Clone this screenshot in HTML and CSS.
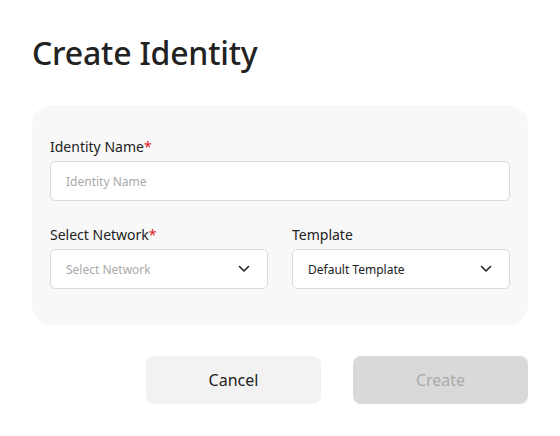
FILE: index.html
```html
<!DOCTYPE html>
<html>
<head>
<meta charset="utf-8">
<link rel="stylesheet" href="styles.css">
</head>
<body>
<div class="page">
  <h1 class="title">Create Identity</h1>
  <div class="card">
    <div class="field">
      <label class="label">Identity Name<span class="req">*</span></label>
      <div class="input placeholder">Identity Name</div>
    </div>
    <div class="row">
      <div class="field">
        <label class="label">Select Network<span class="req">*</span></label>
        <div class="input select placeholder">
          <span>Select Network</span>
          <svg class="chev" width="12" height="8" viewBox="0 0 12 8"><path d="M1.5 1.5 L6 6 L10.5 1.5" fill="none" stroke="#222" stroke-width="1.6" stroke-linecap="round" stroke-linejoin="round"/></svg>
        </div>
      </div>
      <div class="field">
        <label class="label">Template</label>
        <div class="input select value">
          <span>Default Template</span>
          <svg class="chev" width="12" height="8" viewBox="0 0 12 8"><path d="M1.5 1.5 L6 6 L10.5 1.5" fill="none" stroke="#222" stroke-width="1.6" stroke-linecap="round" stroke-linejoin="round"/></svg>
        </div>
      </div>
    </div>
  </div>
  <div class="actions">
    <button class="btn cancel">Cancel</button>
    <button class="btn create" disabled>Create</button>
  </div>
</div>
</body>
</html>
```
FILE: styles.css
```css
* { box-sizing: border-box; }
body {
  margin: 0;
  background: #fff;
  font-family: "Noto Sans", "Open Sans", sans-serif;
  color: #222;
}
.page {
  padding: 30px 32px 0 32px;
}
.title {
  margin: 0;
  font-size: 32px;
  font-weight: 500;
  line-height: 46px;
  letter-spacing: -0.2px;
  color: #222;
}
.card {
  margin-top: 29px;
  background: #f8f8f8;
  border-radius: 20px;
  padding: 32px 18px 36px 18px;
  display: flex;
  flex-direction: column;
  gap: 24px;
}
.row {
  display: grid;
  grid-template-columns: 1fr 1fr;
  gap: 24px;
}
.field {
  display: flex;
  flex-direction: column;
  gap: 4px;
}
.label {
  font-size: 14px;
  line-height: 20px;
  color: #222;
}
.req { color: #e0161e; }
.input {
  height: 40px;
  background: #fff;
  border: 1px solid #d9d9d9;
  border-radius: 5px;
  padding: 0 15px;
  display: flex;
  align-items: center;
  font-size: 12px;
}
.placeholder { color: #aaa; }
.value { color: #222; }
.select { justify-content: space-between; padding-right: 17px; }
.chev { display: block; }
.actions {
  display: flex;
  justify-content: flex-end;
  gap: 32px;
  margin-top: 31px;
}
.btn {
  width: 175px;
  height: 48px;
  border: none;
  border-radius: 8px;
  font-family: inherit;
  font-size: 16px;
}
.cancel { background: #f2f2f2; color: #222; }
.create { background: #d9d9d9; color: #aaa; }
```
